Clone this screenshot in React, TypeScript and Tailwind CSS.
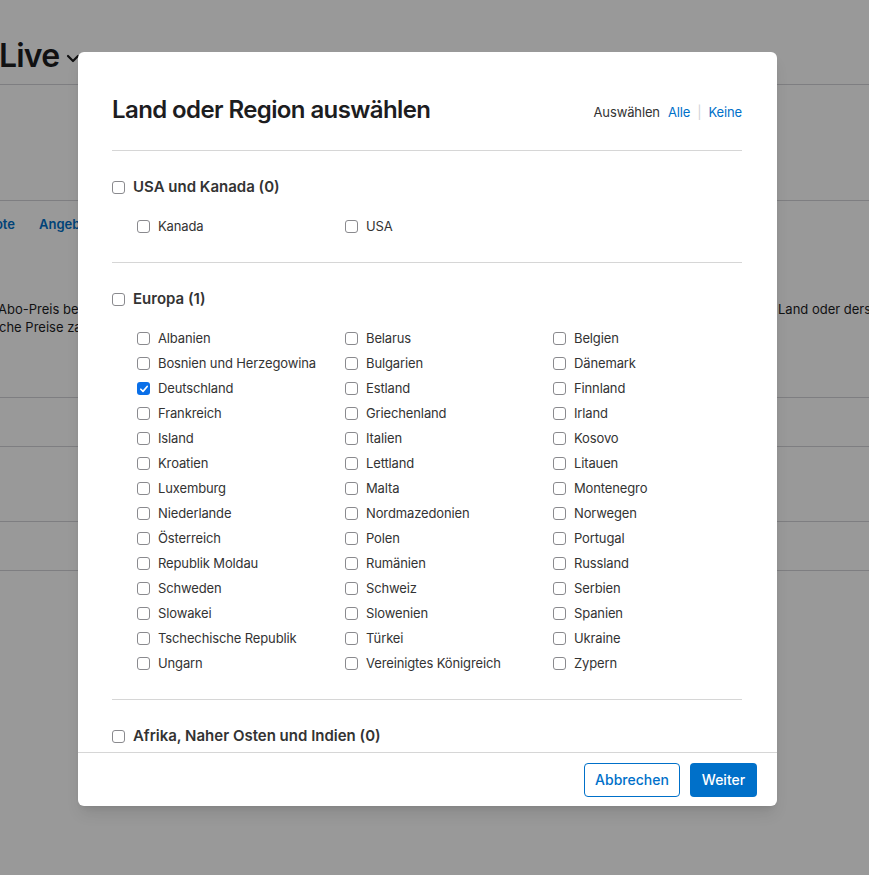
const regions = [
  {
    name: 'USA und Kanada',
    countries: [{ name: 'Kanada' }, { name: 'USA' }],
  },
  {
    name: 'Europa',
    countries: [
      'Albanien', 'Belarus', 'Belgien',
      'Bosnien und Herzegowina', 'Bulgarien', 'Dänemark',
      'Deutschland', 'Estland', 'Finnland',
      'Frankreich', 'Griechenland', 'Irland',
      'Island', 'Italien', 'Kosovo',
      'Kroatien', 'Lettland', 'Litauen',
      'Luxemburg', 'Malta', 'Montenegro',
      'Niederlande', 'Nordmazedonien', 'Norwegen',
      'Österreich', 'Polen', 'Portugal',
      'Republik Moldau', 'Rumänien', 'Russland',
      'Schweden', 'Schweiz', 'Serbien',
      'Slowakei', 'Slowenien', 'Spanien',
      'Tschechische Republik', 'Türkei', 'Ukraine',
      'Ungarn', 'Vereinigtes Königreich', 'Zypern',
    ].map((name) => ({ name, checked: name === 'Deutschland' })),
  },
  {
    name: 'Afrika, Naher Osten und Indien',
    countries: [
      'Ägypten', 'Bahrain', 'Indien', 'Israel', 'Jordanien', 'Kenia',
    ].map((name) => ({ name })),
  },
];

function Box({ checked }: { checked?: boolean }) {
  if (checked) {
    return (
      <span className="flex h-[13px] w-[13px] shrink-0 items-center justify-center rounded-[3px] bg-[#0a6fe8]">
        <svg viewBox="0 0 12 12" className="h-[10px] w-[10px]">
          <path d="M2.2 6.3 L4.8 8.8 L9.8 3" fill="none" stroke="white" strokeWidth="2" strokeLinecap="round" strokeLinejoin="round" />
        </svg>
      </span>
    );
  }
  return <span className="h-[13px] w-[13px] shrink-0 rounded-[3px] border border-[#8a8a8e] bg-white" />;
}

function Region({ region }: { region: (typeof regions)[number] }) {
  const count = region.countries.filter((c: { checked?: boolean }) => c.checked).length;
  return (
    <div className="border-t border-[#d6d6d6] pt-[26px] pb-[23px]">
      <label className="flex h-5 items-center gap-2">
        <Box />
        <span className="text-[15px] font-semibold text-[#333]">
          {region.name} ({count})
        </span>
      </label>
      <div className="mt-[17px] grid grid-cols-[208px_208px_208px] pl-[25px]">
        {region.countries.map((c: { name: string; checked?: boolean }) => (
          <label key={c.name} className="flex h-[25px] items-center gap-2">
            <Box checked={c.checked} />
            <span className="text-[13px] tracking-[-0.01em] text-[#333]">{c.name}</span>
          </label>
        ))}
      </div>
    </div>
  );
}

function Backdrop() {
  return (
    <div className="h-[875px] w-[869px] overflow-hidden bg-white text-[#1d1d1f]">
      <div className="flex h-[84px] items-center pt-[28px]">
        <h1 className="-ml-[1px] text-[32px] font-semibold leading-none tracking-tight">Live</h1>
        <svg viewBox="0 0 16 16" className="ml-[6px] mt-1 h-4 w-4">
          <path d="M3 6 L8 11 L13 6" fill="none" stroke="#1d1d1f" strokeWidth="2.2" strokeLinecap="round" strokeLinejoin="round" />
        </svg>
      </div>
      <div className="h-[116px] border-t border-[#d2d2d7]" />
      <div className="border-t border-[#d2d2d7] pt-[14px]">
        <div className="flex h-5 items-center gap-6 text-[13px] font-semibold text-[#0070c9]">
          <div className="flex w-[15px] justify-end whitespace-nowrap">Abonnementangebote</div>
          <div className="w-[39px] overflow-hidden whitespace-nowrap">Angebotscodes</div>
        </div>
        {/* pricing note; the middle part sits under the sheet */}
        <div className="mt-[65px] text-[13px] leading-[18px] text-[#1d1d1f]">
          <div className="flex whitespace-nowrap">
            <div className="w-[78px] shrink-0 overflow-hidden">
              <span className="-ml-[2px] inline-block">Abo-Preis bearbeitest</span>
            </div>
            <div className="w-[700px] shrink-0" />
            <span>Land oder derselben Region.</span>
          </div>
          <div className="w-[78px] overflow-hidden whitespace-nowrap">
            <span className="-ml-[1px] inline-block">che Preise zahlen</span>
          </div>
        </div>
        <div className="mt-[61px] h-[49px] border-t border-[#d2d2d7]" />
        <div className="h-[75px] border-t border-[#d2d2d7]" />
        <div className="h-[49px] border-t border-[#d2d2d7]" />
        <div className="border-t border-[#d2d2d7]" />
      </div>
    </div>
  );
}

export default function App() {
  return (
    <div className="relative h-[875px] w-[869px] overflow-hidden" style={{ fontFamily: 'Inter, "Noto Sans", sans-serif' }}>
      <Backdrop />
      <div className="absolute inset-0 bg-black/40" />
      <div className="absolute left-[78px] top-[52px] flex h-[754px] w-[699px] flex-col overflow-hidden rounded-[6px] bg-white shadow-lg">
        <div className="flex-1 overflow-hidden px-[34px] pr-[35px]">
          <div className="flex h-[98px] items-start justify-between pt-[43px]">
            <h2 className="text-[24px] font-semibold leading-[30px] tracking-[-0.025em] text-[#1d1d1f]">
              Land oder Region auswählen
            </h2>
            <div className="mt-[8px] flex items-center text-[13px] tracking-[-0.01em] text-[#333]">
              <span>Auswählen</span>
              <button className="ml-2 text-[#0070c9]">Alle</button>
              <span className="mx-[7px] text-[#d2d2d7]">|</span>
              <button className="text-[#0070c9]">Keine</button>
            </div>
          </div>
          {regions.map((r) => (
            <Region key={r.name} region={r} />
          ))}
        </div>
        <div className="flex h-[54px] shrink-0 items-center justify-end gap-[10px] border-t border-[#d6d6d6] pr-[20px]">
          <button className="h-[34px] w-[96px] rounded-[4px] border border-[#0070c9] text-[14px] font-medium text-[#0070c9]">
            Abbrechen
          </button>
          <button className="h-[34px] w-[67px] rounded-[4px] bg-[#0070c9] text-[14px] font-medium text-white">
            Weiter
          </button>
        </div>
      </div>
    </div>
  );
}
